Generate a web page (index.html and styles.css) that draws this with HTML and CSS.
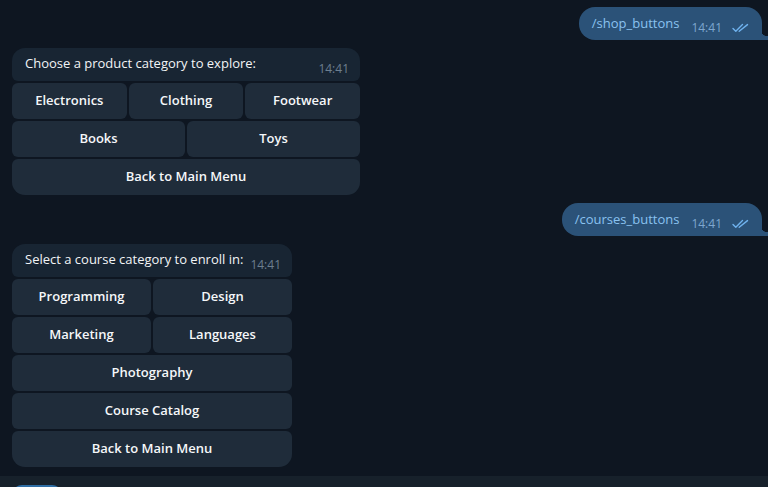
FILE: index.html
```html
<!DOCTYPE html>
<html>
<head>
<meta charset="utf-8">
<link rel="stylesheet" href="styles.css">
</head>
<body>
<div class="chat">
  <div class="out-row first">
    <div class="out-bubble">
      <span class="cmd">/shop_buttons</span>
      <span class="out-meta"><span class="time">14:41</span>
        <svg class="ticks" width="17" height="10" viewBox="0 0 17 10"><path d="M1 5.5 L3.8 8.3 L10.5 1.6" fill="none" stroke="currentColor" stroke-width="1.4" stroke-linecap="round" stroke-linejoin="round"/><path d="M7.2 8.3 L15.5 1.6" fill="none" stroke="currentColor" stroke-width="1.4" stroke-linecap="round"/></svg>
      </span>
    </div>
  </div>

  <div class="in-msg w1">
    <div class="in-bubble">
      <span class="msg-text">Choose a product category to explore:</span>
      <span class="in-time">14:41</span>
    </div>
    <div class="kb-row cols3">
      <div class="kb-btn">Electronics</div>
      <div class="kb-btn">Clothing</div>
      <div class="kb-btn">Footwear</div>
    </div>
    <div class="kb-row cols2">
      <div class="kb-btn">Books</div>
      <div class="kb-btn">Toys</div>
    </div>
    <div class="kb-row cols1 last">
      <div class="kb-btn">Back to Main Menu</div>
    </div>
  </div>

  <div class="out-row">
    <div class="out-bubble">
      <span class="cmd">/courses_buttons</span>
      <span class="out-meta"><span class="time">14:41</span>
        <svg class="ticks" width="17" height="10" viewBox="0 0 17 10"><path d="M1 5.5 L3.8 8.3 L10.5 1.6" fill="none" stroke="currentColor" stroke-width="1.4" stroke-linecap="round" stroke-linejoin="round"/><path d="M7.2 8.3 L15.5 1.6" fill="none" stroke="currentColor" stroke-width="1.4" stroke-linecap="round"/></svg>
      </span>
    </div>
  </div>

  <div class="in-msg w2">
    <div class="in-bubble">
      <span class="msg-text">Select a course category to enroll in:</span>
      <span class="in-time">14:41</span>
    </div>
    <div class="kb-row cols2">
      <div class="kb-btn">Programming</div>
      <div class="kb-btn">Design</div>
    </div>
    <div class="kb-row cols2">
      <div class="kb-btn">Marketing</div>
      <div class="kb-btn">Languages</div>
    </div>
    <div class="kb-row cols1">
      <div class="kb-btn">Photography</div>
    </div>
    <div class="kb-row cols1">
      <div class="kb-btn">Course Catalog</div>
    </div>
    <div class="kb-row cols1 last">
      <div class="kb-btn">Back to Main Menu</div>
    </div>
  </div>
</div>
<div class="composer">
  <div class="composer-btn"></div>
</div>
</body>
</html>
```

FILE: styles.css
```css
* { box-sizing: border-box; }
html, body {
  margin: 0;
  padding: 0;
  height: 100%;
  overflow: hidden;
}
body {
  background: #0e1621;
  font-family: "Open Sans", "Noto Sans", sans-serif;
  font-size: 13px;
  color: #f5f5f5;
  display: flex;
  flex-direction: column;
}
.chat {
  flex: 1;
  display: flex;
  flex-direction: column;
  padding: 7px 6px 0 12px;
  gap: 8px;
}
.out-row {
  display: flex;
  justify-content: flex-end;
}
.out-bubble {
  position: relative;
  background: #2b5278;
  border-radius: 16px 16px 0 16px;
  height: 33px;
  display: flex;
  align-items: center;
  padding: 0 13px 0 13px;
}
.out-bubble::after {
  content: "";
  position: absolute;
  right: -6px;
  bottom: 0;
  width: 6px;
  height: 12px;
  background: radial-gradient(circle at 100% 0, transparent 8px, #2b5278 8.5px);
}
.cmd {
  color: #8ac2f0;
  line-height: 18px;
  margin-top: -2px;
}
.out-meta {
  display: flex;
  align-items: center;
  margin-left: 12px;
  margin-top: 8px;
  color: #7ea7cf;
}
.time {
  font-size: 12px;
  line-height: 14px;
}
.ticks {
  margin-left: 10px;
  color: #6fb2ee;
}
.in-msg {
  display: flex;
  flex-direction: column;
  gap: 2px;
}
.w1 { width: 348px; }
.w2 { width: 280px; }
.in-bubble {
  background: #182533;
  border-radius: 13px 13px 6px 6px;
  height: 33px;
  display: flex;
  justify-content: space-between;
  align-items: flex-start;
  padding: 6px 11px 0 13px;
}
.msg-text {
  line-height: 18px;
  color: #f2f4f6;
}
.in-time {
  font-size: 12px;
  color: #6d7f8f;
  margin-top: 8px;
  line-height: 14px;
}
.kb-row {
  display: grid;
  gap: 2px;
}
.cols3 { grid-template-columns: 1fr 1fr 1fr; }
.cols2 { grid-template-columns: 1fr 1fr; }
.cols1 { grid-template-columns: 1fr; }
.kb-btn {
  background: #1f2c3a;
  border-radius: 6px;
  height: 36px;
  display: flex;
  align-items: center;
  justify-content: center;
  font-weight: 600;
  color: #f5f7f9;
  padding-bottom: 3px;
}
.last .kb-btn:first-child { border-bottom-left-radius: 13px; }
.last .kb-btn:last-child { border-bottom-right-radius: 13px; }
.composer {
  height: 11px;
  background: #17212b;
  padding: 9px 0 0 12px;
  flex-shrink: 0;
}
.composer-btn {
  width: 50px;
  height: 20px;
  background: #2f6ea5;
  border-radius: 10px;
}
```
